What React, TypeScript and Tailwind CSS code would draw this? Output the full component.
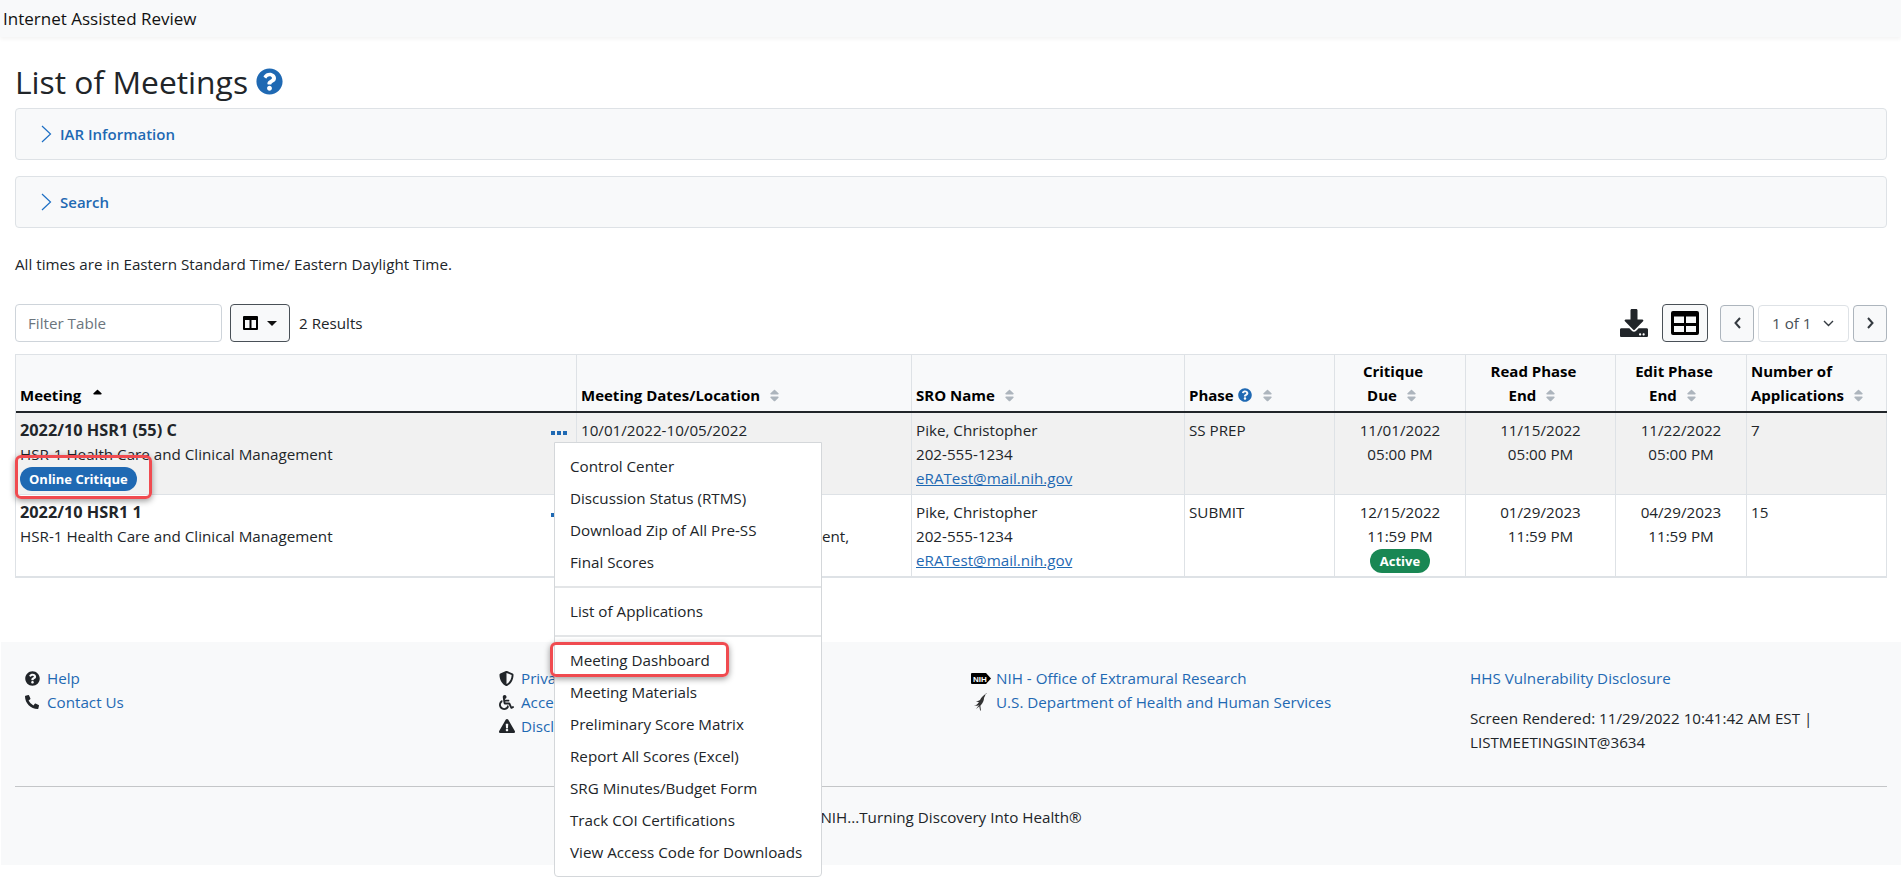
import React from 'react';
import {
  FaQuestionCircle,
  FaPhoneAlt,
  FaShieldAlt,
  FaWheelchair,
  FaExclamationTriangle,
  FaDownload,
  FaSort,
  FaSortUp,
} from 'react-icons/fa';

const font = 'font-["Open_Sans",sans-serif]';

const SortIcon = () => <FaSort className="inline ml-[7px] text-[#adb5bd] text-[15px] align-[-2px]" />;

const Chevron = () => (
  <svg width="11" height="18" viewBox="0 0 11 18" fill="none" className="mr-[8px] shrink-0">
    <path d="M1 1l8.5 8L1 17" stroke="#1d6fc4" strokeWidth="1.2" />
  </svg>
);

const Accordion = ({ label }: { label: string }) => (
  <div className="h-[52px] flex items-center pl-[25px] bg-[#f8f9fa] border border-[#dee2e6] rounded-[4px] text-[#1f69b3] text-[15px] font-semibold">
    <Chevron />
    {label}
  </div>
);

const menuGroups = [
  ['Control Center', 'Discussion Status (RTMS)', 'Download Zip of All Pre-SS', 'Final Scores'],
  ['List of Applications'],
  ['Meeting Dashboard', 'Meeting Materials', 'Preliminary Score Matrix', 'Report All Scores (Excel)', 'SRG Minutes/Budget Form', 'Track COI Certifications', 'View Access Code for Downloads'],
];

const Dots = () => (
  <div className="absolute right-[9px] top-[18px] flex gap-[2px]">
    <i className="w-[4px] h-[4px] bg-[#1f69b3]" />
    <i className="w-[4px] h-[4px] bg-[#1f69b3]" />
    <i className="w-[4px] h-[4px] bg-[#1f69b3]" />
  </div>
);

const Menu = () => (
  <div className="absolute left-[554px] top-[442px] w-[268px] h-[435px] bg-white border border-[#d4d7da] rounded-b-[4px] pt-[7px] z-10">
    {menuGroups.map((g, i) => (
      <div key={i} className={i > 0 ? 'border-t-2 border-[#e3e5e7] mt-[8px] pt-[7px]' : ''}>
        {g.map((m) => (
          <div key={m} className="h-[32px] leading-[32px] pl-[15px] whitespace-nowrap text-[#212529]">{m}</div>
        ))}
      </div>
    ))}
  </div>
);

const Callout = ({ className }: { className: string }) => (
  <div className={`absolute border-[3px] border-[#f04b50] rounded-[6px] shadow-[0_2px_6px_rgba(0,0,0,0.4)] z-20 ${className}`} />
);

const Head = ({ children, center, sort, className = '' }: { children: React.ReactNode; center?: boolean; sort?: boolean; className?: string }) => (
  <div className={`pl-[4px] pb-[4px] border-r border-[#dee2e6] flex items-end font-bold text-black text-[15px] ${center ? 'justify-center text-center pr-[18px]' : 'pr-[4px]'} ${className}`}>
    <div>{children}{sort !== false && <SortIcon />}</div>
  </div>
);

const Cell = ({ children, center, className = '' }: { children?: React.ReactNode; center?: boolean; className?: string }) => (
  <div className={`relative px-[4px] pt-[5px] pb-[4px] border-r border-[#dee2e6] ${center ? 'text-center' : ''} ${className}`}>{children}</div>
);

const cols = 'grid grid-cols-[561px_335px_273px_150px_131px_150px_131px_140px]';

const Sro = () => (
  <>
    <div>Pike, Christopher</div>
    <div>202-555-1234</div>
    <a className="text-[#1f69b3] underline">eRATest@mail.nih.gov</a>
  </>
);

const FLink = ({ icon, width = 'w-[22px]', children }: { icon?: React.ReactNode; width?: string; children: React.ReactNode }) => (
  <div className="flex items-center h-[24px]">
    {icon && <span className={`${width} shrink-0 flex text-[#212529]`}>{icon}</span>}
    <a className="text-[#1f69b3] whitespace-nowrap">{children}</a>
  </div>
);

export default function App() {
  return (
    <div className={`relative h-[877px] overflow-hidden bg-white text-[15.2px] leading-[24px] text-[#212529] ${font}`}>
      <div className="h-[37px] bg-[#f8f9fa] shadow-[0_2px_4px_rgba(0,0,0,0.05)] pl-[3px] flex items-center text-[17px] text-[#111]">Internet Assisted Review</div>

      <div className="pl-[15px] pr-[14px]">
        <h1 className="mt-[20px] h-[51px] pb-[2px] flex items-center text-[31.800px] font-medium text-[#212529]">
          List of Meetings
          <FaQuestionCircle className="ml-[8px] text-[#1f69b3] text-[27px]" />
        </h1>
        <div className="flex flex-col gap-[16px]">
          <Accordion label="IAR Information" />
          <Accordion label="Search" />
        </div>
        <p className="mt-[24px]">All times are in Eastern Standard Time/ Eastern Daylight Time.</p>

        <div className="mt-[28px] h-[38px] flex items-center">
          <div className="w-[207px] h-[38px] border border-[#ced4da] rounded-[4px] flex items-center pl-[12px] text-[#6c757d]">Filter Table</div>
          <button className="ml-[8px] w-[60px] h-[38px] flex items-center justify-center gap-[9px] bg-[#f8f9fa] border border-[#495057] rounded-[4px]">
            <svg width="15" height="14" viewBox="0 0 15 14"><path fillRule="evenodd" d="M1 0h13a1 1 0 011 1v12a1 1 0 01-1 1H1a1 1 0 01-1-1V1a1 1 0 011-1zm1 4v8h4.500V4zm6.500 0v8H13V4z" fill="#000" /></svg>
            <svg width="10" height="5" viewBox="0 0 10 5"><path d="M0 0h10L5 5z" fill="#111" /></svg>
          </button>
          <span className="ml-[9px]">2 Results</span>
          <div className="ml-auto flex items-center">
            <FaDownload className="text-[28px] text-[#212529]" />
            <button className="ml-[14px] w-[46px] h-[38px] flex items-center justify-center border border-[#495057] rounded-[4px] bg-[#f8f9fa]">
              <svg width="28" height="24" viewBox="0 0 28 24"><path fillRule="evenodd" d="M2 0h24a2 2 0 012 2v20a2 2 0 01-2 2H2a2 2 0 01-2-2V2a2 2 0 012-2zm1 5.500V12h10V5.500zm12 0V12h10V5.500zM3 15v6h10v-6zm12 0v6h10v-6z" fill="#000" /></svg>
            </button>
            <button className="ml-[12px] w-[34px] h-[37px] flex items-center justify-center border border-[#adb5bd] rounded-[4px] bg-[#f8f9fa]">
              <svg width="7" height="12" viewBox="0 0 7 12" fill="none"><path d="M6 1L1.500 6 6 11" stroke="#343a40" strokeWidth="2" /></svg>
            </button>
            <div className="ml-[4px] w-[91px] h-[37px] flex items-center pl-[13px] border border-[#dee2e6] rounded-[4px] text-[#495057]">
              1 of 1
              <svg width="11" height="7" viewBox="0 0 11 7" fill="none" className="ml-[11px]"><path d="M1 1l4.500 4.500L10 1" stroke="#343a40" strokeWidth="1.4" /></svg>
            </div>
            <button className="ml-[4px] w-[34px] h-[37px] flex items-center justify-center border border-[#adb5bd] rounded-[4px] bg-[#f8f9fa]">
              <svg width="7" height="12" viewBox="0 0 7 12" fill="none"><path d="M1 1l4.500 5L1 11" stroke="#343a40" strokeWidth="2" /></svg>
            </button>
          </div>
        </div>

        <div className="mt-[12px] border border-[#dee2e6] border-r-0">
          <div className={`${cols} h-[58px] bg-[#f8f9fa] border-b-[2px] border-[#212529]`}>
            <Head sort={false}>Meeting<FaSortUp className="inline ml-[9px] text-[15px] text-black align-[-2px]" /></Head>
            <Head>Meeting Dates/Location</Head>
            <Head>SRO Name</Head>
            <Head>Phase <FaQuestionCircle className="inline text-[#1f69b3] text-[14px] align-[-1px] mr-[1px]" /></Head>
            <Head center>Critique<br />Due</Head>
            <Head center>Read Phase<br />End</Head>
            <Head center>Edit Phase<br />End</Head>
            <Head>Number of<br />Applications</Head>
          </div>
          <div className={`${cols} h-[82px] bg-[#f1f1f1] border-b border-[#dee2e6]`}>
            <Cell>
              <div className="font-bold text-[16.300px]">2022/10 HSR1 (55) C</div>
              <div>HSR-1 Health Care and Clinical Management</div>
              <span className="inline-block h-[24px] px-[9px] rounded-full bg-[#1f69b3] text-white font-bold text-[13px]">Online Critique</span>
              <Dots />
            </Cell>
            <Cell>10/01/2022-10/05/2022</Cell>
            <Cell><Sro /></Cell>
            <Cell>SS PREP</Cell>
            <Cell center>11/01/2022<br />05:00 PM</Cell>
            <Cell center>11/15/2022<br />05:00 PM</Cell>
            <Cell center>11/22/2022<br />05:00 PM</Cell>
            <Cell>7</Cell>
          </div>
          <div className={`${cols} h-[82px] border-b border-[#dee2e6]`}>
            <Cell>
              <div className="font-bold text-[16.300px]">2022/10 HSR1 1</div>
              <div>HSR-1 Health Care and Clinical Management</div>
              <Dots />
            </Cell>
            <Cell><div className="h-[24px]" /><div className="pl-[241px]">ent,</div></Cell>
            <Cell><Sro /></Cell>
            <Cell>SUBMIT</Cell>
            <Cell center>
              12/15/2022<br />11:59 PM<br />
              <span className="inline-block h-[24px] px-[10px] rounded-full bg-[#198754] text-white font-bold text-[13px]">Active</span>
            </Cell>
            <Cell center>01/29/2023<br />11:59 PM</Cell>
            <Cell center>04/29/2023<br />11:59 PM</Cell>
            <Cell>15</Cell>
          </div>
        </div>
      </div>

      <footer className="ml-[1px] mt-[64px] h-[223px] bg-[#f8f9fa] pt-[24px]">
        <div className="h-[120px] pl-[24px] grid grid-cols-[474px_472px_499px_1fr]">
          <div>
            <FLink icon={<FaQuestionCircle className="text-[15px]" />}>Help</FLink>
            <FLink icon={<FaPhoneAlt className="text-[14px]" />}>Contact Us</FLink>
          </div>
          <div>
            <FLink icon={<FaShieldAlt className="text-[15px]" />}>Privacy Policy</FLink>
            <FLink icon={<FaWheelchair className="text-[15px]" />}>Accessibility</FLink>
            <FLink icon={<FaExclamationTriangle className="text-[16px]" />}>Disclaimers</FLink>
          </div>
          <div>
            <FLink width="w-[25px]" icon={
              <svg width="20" height="11" viewBox="0 0 20 11"><path d="M1 0h14l5 5.500L15 11H1a1 1 0 01-1-1V1a1 1 0 011-1z" fill="#000" /><text x="2" y="8.500" fontSize="8" fontWeight="700" fill="#fff" fontFamily="Liberation Sans">NIH</text></svg>
            }>NIH - Office of Extramural Research</FLink>
            <FLink width="w-[25px]" icon={
              <svg width="16" height="18" viewBox="0 0 16 18" fill="#333" className="ml-[2px]"><path d="M14 0C11 2 8 4 7 7L3 9l3 0-3 4 3-1-3 4 5-4c2-2 3-5 3-7 1-2 2-4 2-6z" /><path d="M1 13l6-3 1 8-1-1-1-5z" /></svg>
            }>U.S. Department of Health and Human Services</FLink>
          </div>
          <div>
            <FLink>HHS Vulnerability Disclosure</FLink>
            <div className="mt-[16px] whitespace-nowrap">Screen Rendered: 11/29/2022 10:41:42 AM EST |<br />LISTMEETINGSINT@3634</div>
          </div>
        </div>
        <div className="mx-[14px] border-t border-[#c4c6c8]" />
        <div className="mt-[18px] text-center text-[#212529]">NIH...Turning Discovery Into Health®</div>
      </footer>

      <Menu />
      <Callout className="left-[15px] top-[455px] w-[137px] h-[44px]" />
      <Callout className="left-[550px] top-[642px] w-[179px] h-[35px]" />
    </div>
  );
}
